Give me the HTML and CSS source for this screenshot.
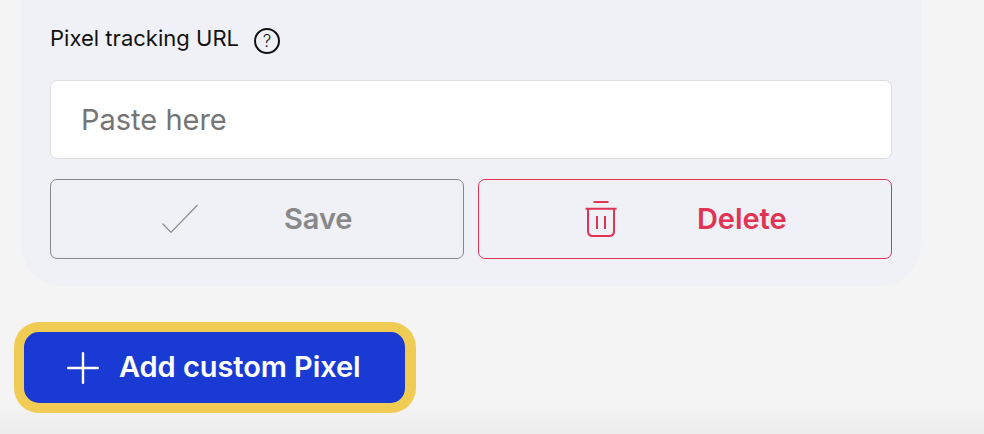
FILE: index.html
```html
<!DOCTYPE html>
<html lang="en">
  <head>
    <meta charset="UTF-8" />
    <meta name="viewport" content="width=device-width, initial-scale=1.0" />
    <link rel="stylesheet" href="styles.css">
    <title>Custom Pixel</title>
  </head>
  <body>
    <div class="pixel-card">
      <div class="label-box">
        <label for="pixel_url" class="label">Pixel tracking URL</label>
        <span class="help">?</span>
      </div>
      <input id="pixel_url" type="text" class="input" placeholder="Paste here" />
      <div class="buttons">
        <button type="button" class="button button-save">
          <svg class="icon" width="38" height="32" viewBox="0 0 38 32" fill="none" stroke="currentColor" stroke-width="1.100">
            <path d="M1.500 20.500L10 29.500L36.500 2" />
          </svg>
          <span class="button-text">Save</span>
        </button>
        <button type="button" class="button button-delete">
          <svg class="icon" width="32" height="38" viewBox="0 0 32 38" fill="none" stroke="currentColor" stroke-width="2">
            <path d="M8.500 2H23.500M0.500 8.700H31.500M3 8.700V31Q3 36 8 36H24Q29 36 29 31V8.700M12 16V29M20 16V29" />
          </svg>
          <span class="button-text">Delete</span>
        </button>
      </div>
    </div>
    <div class="footer">
      <button type="button" class="add-button">
        <svg class="icon" width="32" height="32" viewBox="0 0 32 32" fill="none" stroke="currentColor" stroke-width="2.400" stroke-linecap="round">
          <path d="M16 1.200V30.800M1.200 16H30.800" />
        </svg>
        <span class="button-text">Add custom Pixel</span>
      </button>
    </div>
  </body>
</html>
```
FILE: styles.css
```css
* {
  box-sizing: border-box;
}

body {
  margin: 0;
  height: 434px;
  background: linear-gradient(#f4f4f4 400px, #ededed 434px);
  font-family: Inter, "Liberation Sans", sans-serif;
  overflow: hidden;
}

.pixel-card {
  width: 900px;
  height: 287px;
  margin-left: 21px;
  padding: 24px 29px 28px;

  background-color: #f0f1f6;
  border-radius: 0 0 44px 44px;
}

.label-box {
  display: flex;
  align-items: flex-start;
  gap: 15px;
  height: 56px;
}

.label {
  color: #111;
  font-size: 22px;
  line-height: 29px;
  letter-spacing: 0.02px;
}

.help {
  width: 26px;
  height: 26px;
  margin-top: 4px;

  border: 2px solid #111;
  border-radius: 50%;
  color: #111;
  font-size: 17px;
  font-weight: 300;
  line-height: 22px;
  text-align: center;
}

.input {
  display: block;
  width: 100%;
  height: 79px;
  padding: 0 30px;

  background-color: white;
  border: 1px solid #dddee2;
  border-radius: 7px;
  font-family: inherit;
  font-size: 29px;
}

.input::placeholder {
  color: #757575;
}

.buttons {
  display: grid;
  grid-template-columns: 1fr 1fr;
  gap: 14px;
  margin-top: 20px;
}

.button {
  display: flex;
  align-items: center;
  height: 80px;
  padding: 0;

  background-color: transparent;
  border: 1px solid;
  border-radius: 7px;
  font-family: inherit;
  font-size: 29px;
  font-weight: 600;
}

.button-save {
  padding-left: 110px;
  gap: 85px;
  color: #888;
}

.button-delete {
  padding-left: 106px;
  gap: 80px;
  color: #e13454;
}

.button-text {
  padding-bottom: 2px;
  letter-spacing: -0.07px;
}

.icon {
  flex: none;
}

.footer {
  padding: 35px 14px;
}

.add-button {
  display: flex;
  align-items: center;
  gap: 20px;
  width: 402px;
  height: 91px;
  padding: 0 0 0 43px;

  background-color: #193bd3;
  border: 10px solid #f1cc54;
  border-right-width: 11px;
  border-radius: 25px;
  color: white;
  font-family: inherit;
  font-size: 29px;
  font-weight: 600;
  white-space: nowrap;
}
```
